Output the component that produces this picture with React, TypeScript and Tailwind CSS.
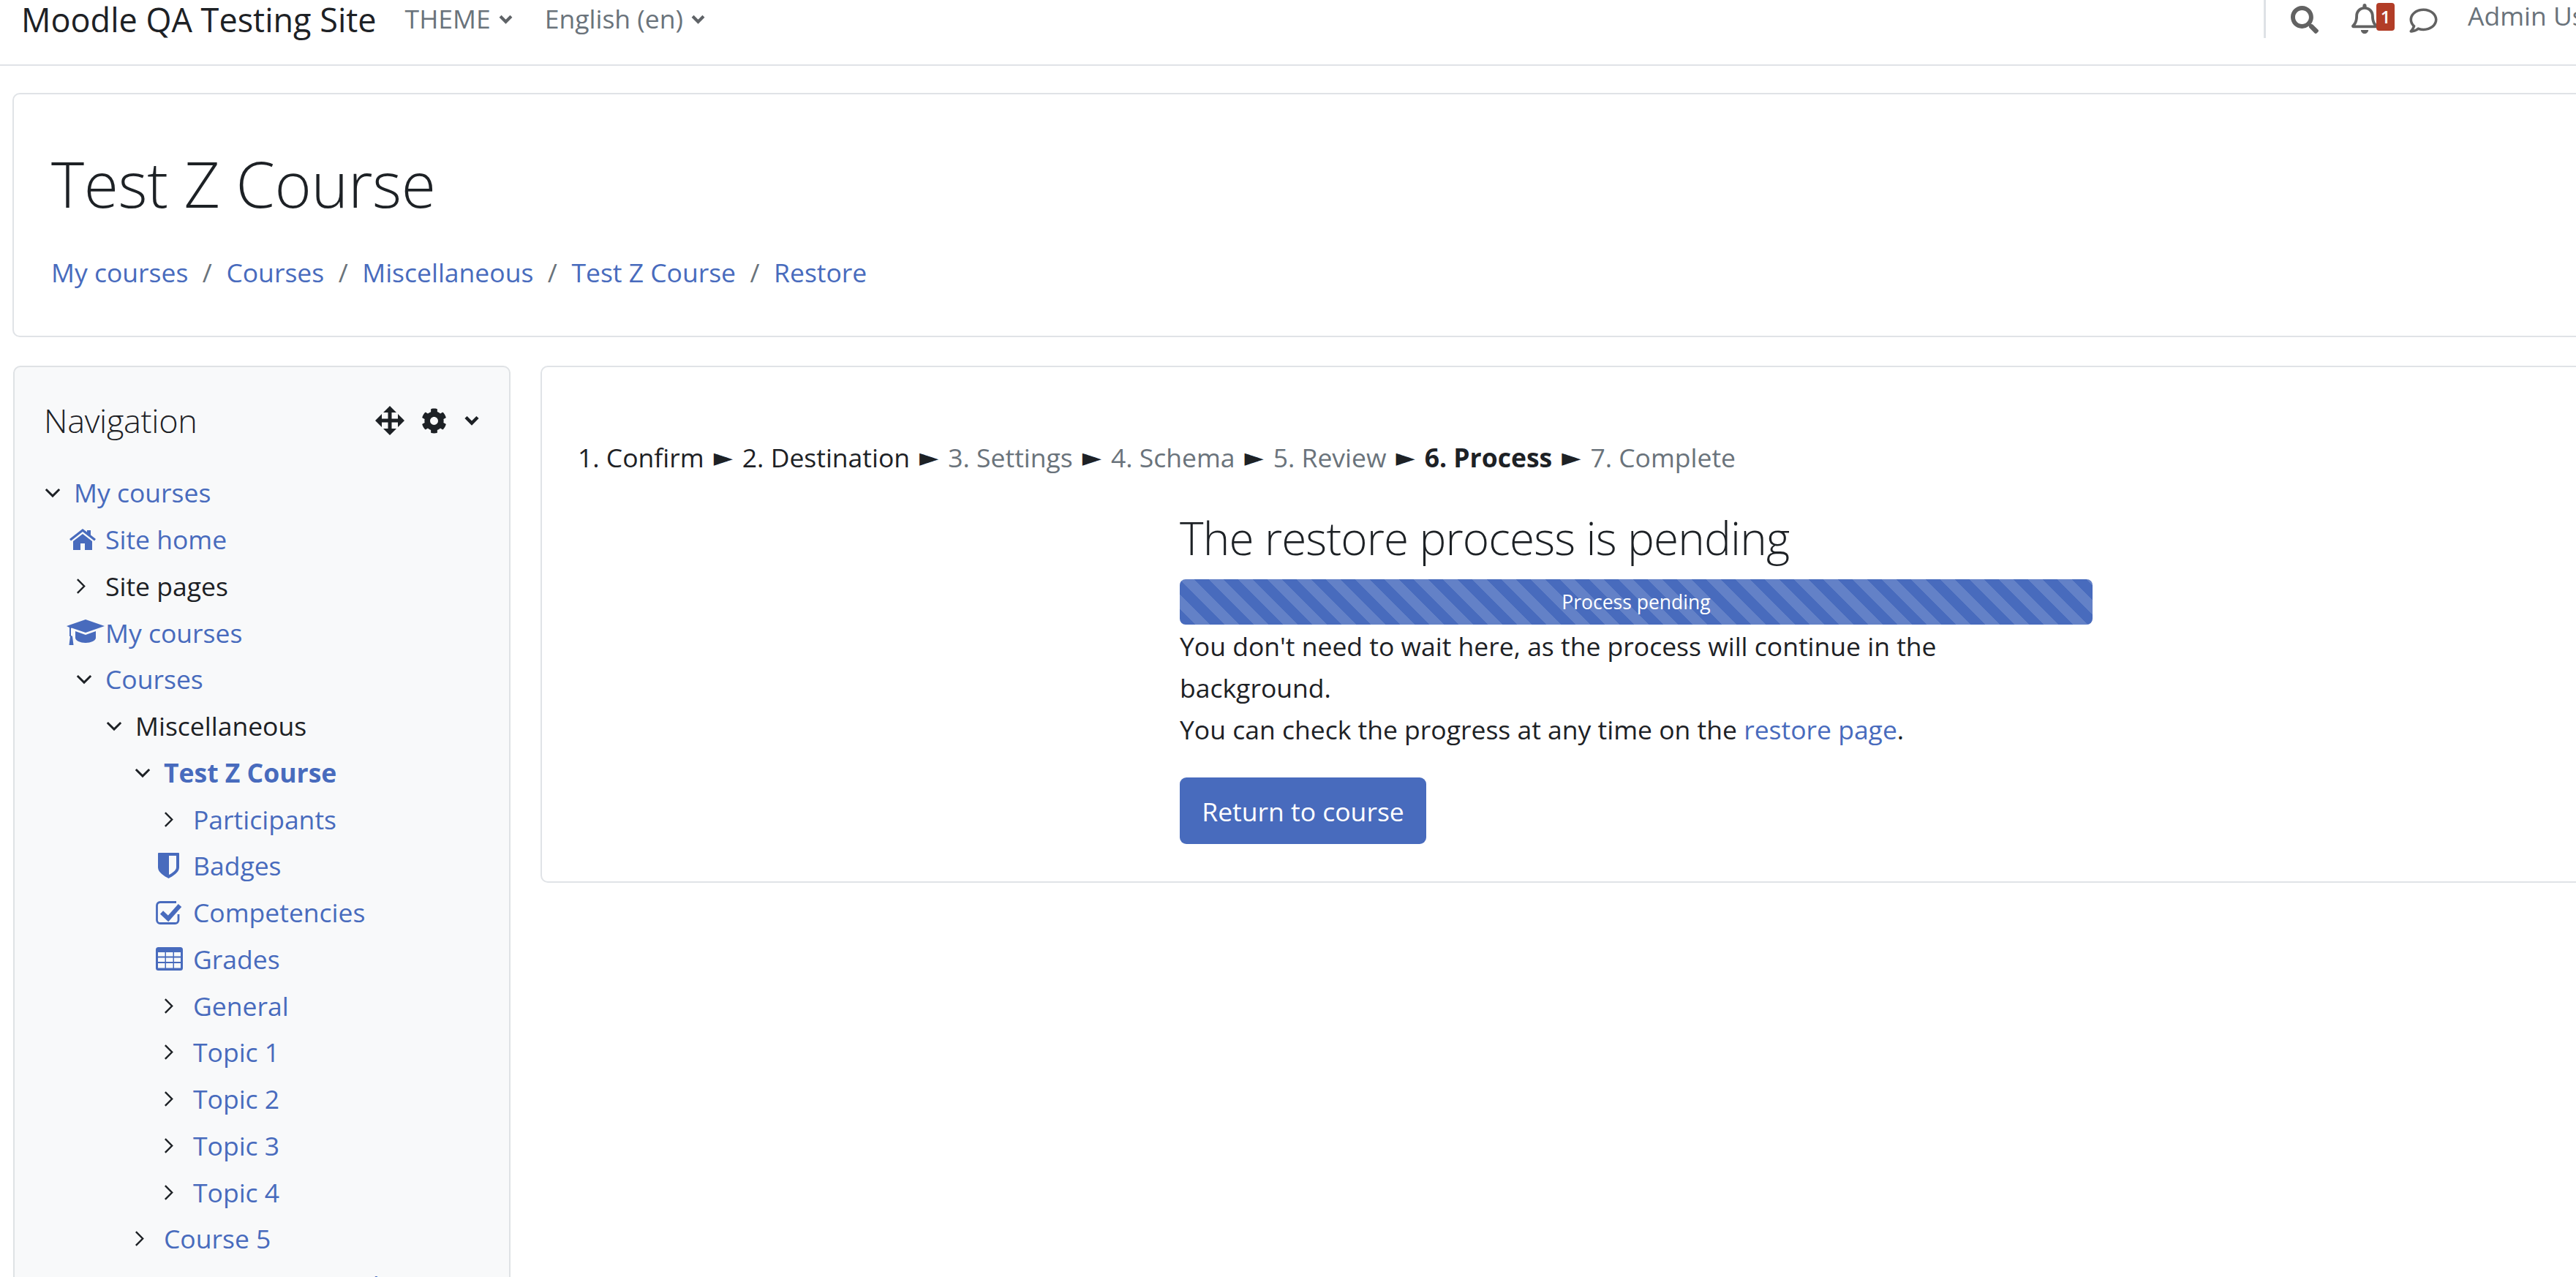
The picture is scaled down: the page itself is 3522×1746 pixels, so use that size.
import React from "react";
import { FaSearch, FaCog, FaRegBell, FaRegComment } from "react-icons/fa";

const Down = ({ className = "" }: { className?: string }) => (
  <svg viewBox="0 0 24 16" className={className} fill="none" stroke="currentColor" strokeWidth="3.2"><path d="M2 3l10 10L22 3" /></svg>
);
const Right = ({ className = "" }: { className?: string }) => (
  <svg viewBox="0 0 14 24" className={className} fill="none" stroke="currentColor" strokeWidth="2.6"><path d="M2 2l10 10L2 22" /></svg>
);
const ThickDown = ({ className = "" }: { className?: string }) => (
  <svg viewBox="0 0 20 14" className={className} fill="none" stroke="currentColor" strokeWidth="4.5"><path d="M2 2.5l8 8 8-8" /></svg>
);
const Home = () => (
  <svg viewBox="0 0 36 29" className="w-[36px] h-[29px] text-[#486bbd]" fill="currentColor">
    <path d="M18 0L0 14l2 2.500L18 4l16 12.500 2-2.500-7-5.500V2h-5v2.500z" />
    <path d="M18 7L5 17v12h10v-9h6v9h10V17z" />
  </svg>
);
const Cap = () => (
  <svg viewBox="0 0 52 36" className="w-[52px] h-[36px] text-[#486bbd]" fill="currentColor">
    <path d="M26 0l26 9-26 9-19-6.500-1 0.500v11h-2V11L0 9z" />
    <path d="M12 16l14 5 14-5v9c0 4-7 7-14 7s-14-3-14-7z" />
    <path d="M3.500 35L5 23l1.500-1 1.500 1 1.500 12z" />
  </svg>
);
const Shield = () => (
  <svg viewBox="0 0 29 35" className="w-[29px] h-[35px] text-[#486bbd]" fill="currentColor">
    <path fillRule="evenodd" d="M1 0h27a1 1 0 011 1v19c0 7-9 12-14.500 15C9 32 0 27 0 20V1a1 1 0 011-1zm14 4v26c4-2 10-6 10-10V4z" />
  </svg>
);
const Check = () => (
  <svg viewBox="0 0 37 32" className="w-[37px] h-[32px] text-[#486bbd]" fill="none" stroke="currentColor">
    <path strokeWidth="2.8" d="M31 18v8a4.500 4.500 0 01-4.500 4.500H6A4.500 4.500 0 011.500 26V6A4.500 4.500 0 016 1.500h22" />
    <path strokeWidth="6" d="M8 15.500l9 8.500L33 6" />
  </svg>
);
const TableIcon = () => (
  <svg viewBox="0 0 37 32" className="w-[37px] h-[32px] text-[#486bbd]">
    <rect width="37" height="32" rx="3.500" fill="currentColor" />
    <g fill="#f8f9fa">
      <rect x="3" y="7" width="9.500" height="5.500" /><rect x="14" y="7" width="9.500" height="5.500" /><rect x="25" y="7" width="9" height="5.500" />
      <rect x="3" y="14.500" width="9.500" height="5.500" /><rect x="14" y="14.500" width="9.500" height="5.500" /><rect x="25" y="14.500" width="9" height="5.500" />
      <rect x="3" y="22" width="9.500" height="6.500" /><rect x="14" y="22" width="9.500" height="6.500" /><rect x="25" y="22" width="9" height="6.500" />
    </g>
  </svg>
);
const Arrows = () => (
  <svg viewBox="0 0 40 40" className="w-[40px] h-[40px]" fill="currentColor">
    <path d="M20 0l9 9h-6.500v8.500H31V11l9 9-9 9v-6.500h-8.500V31H29l-9 9-9-9h6.500v-8.500H9V29l-9-9 9-9v6.500h8.500V9H11z" />
  </svg>
);

type RowT = { t: string; l: number; kind: "down" | "right" | "home" | "cap" | "shield" | "check" | "table"; link?: boolean; bold?: boolean };
const rows: RowT[] = [
  { t: "My courses", l: 0, kind: "down", link: true },
  { t: "Site home", l: 1, kind: "home", link: true },
  { t: "Site pages", l: 1, kind: "right" },
  { t: "My courses", l: 1, kind: "cap", link: true },
  { t: "Courses", l: 1, kind: "down", link: true },
  { t: "Miscellaneous", l: 2, kind: "down" },
  { t: "Test Z Course", l: 3, kind: "down", link: true, bold: true },
  { t: "Participants", l: 4, kind: "right", link: true },
  { t: "Badges", l: 4, kind: "shield", link: true },
  { t: "Competencies", l: 4, kind: "check", link: true },
  { t: "Grades", l: 4, kind: "table", link: true },
  { t: "General", l: 4, kind: "right", link: true },
  { t: "Topic 1", l: 4, kind: "right", link: true },
  { t: "Topic 2", l: 4, kind: "right", link: true },
  { t: "Topic 3", l: 4, kind: "right", link: true },
  { t: "Topic 4", l: 4, kind: "right", link: true },
  { t: "Course 5", l: 3, kind: "right", link: true },
  { t: "Test Course Number", l: 3, kind: "right", link: true },
];
const pads = ["pl-[30px]", "pl-[73px]", "pl-[114px]", "pl-[153px]", "pl-[193px]"];

function RowIcon({ kind }: { kind: RowT["kind"] }) {
  switch (kind) {
    case "down": return <Down className="ml-[11px] w-[22px] h-[15px] text-[#1d2125]" />;
    case "right": return <Right className="ml-[11px] w-[13px] h-[23px] text-[#1d2125]" />;
    case "home": return <div className="ml-[2px]"><Home /></div>;
    case "cap": return <div className="-ml-[2px]"><Cap /></div>;
    case "shield": return <div className="ml-[3px]"><Shield /></div>;
    case "check": return <Check />;
    case "table": return <TableIcon />;
  }
}

const Sep = () => <span className="mx-[13px] text-[#1d2125] text-[34px] font-['DejaVu_Sans',sans-serif]">►</span>;
const Slash = () => <span className="mx-[19.5px] text-[#6a737b]">/</span>;

export default function App() {
  return (
    <div className="w-full h-[1746px] overflow-hidden bg-white font-['Open_Sans',sans-serif] text-[#1d2125] text-[35.5px]">
      <div className="w-[3900px]">
        <header className="h-[90px] border-b-2 border-[#e0e3e7] flex items-start">
          <div className="w-[3095px] shrink-0 flex items-start">
            <span className="ml-[29px] text-[45px] leading-[54px] text-[#1d2125]">Moodle QA Testing Site</span>
            <nav className="flex items-center ml-[39px] h-[52px] text-[#6a737b]">
              <span>THEME</span><ThickDown className="ml-[11px] w-[19px] h-[13px] text-[#5f6367]" />
              <span className="ml-[44px]">English (en)</span><ThickDown className="ml-[11px] w-[19px] h-[13px] text-[#5f6367]" />
            </nav>
          </div>
          <div className="w-[3px] h-[52px] bg-[#dee2e6]" />
          <div className="ml-[34px] mt-[8px] text-[#626262]"><FaSearch className="w-[38px] h-[38px]" /></div>
          <div className="relative ml-[44px] mt-[5px] text-[#626262]">
            <FaRegBell className="w-[38px] h-[41px]" />
            <span className="absolute left-[35px] top-[-1px] w-[25px] h-[38px] rounded-[4px] bg-[#b23d27] text-white text-[24px] leading-[38px] text-center font-semibold">1</span>
          </div>
          <div className="ml-[41px] mt-[9px] text-[#626262]"><FaRegComment className="w-[41px] h-[38px]" /></div>
          <span className="ml-[40px] leading-[42px] text-[#6a737b]">Admin User</span>
        </header>

        <section className="ml-[17px] mt-[37px] h-[334px] border-2 border-[#e0e3e7] rounded-[10px] pl-[51px]">
          <h1 className="mt-[62px] text-[86px] leading-[120px] font-light tracking-[-0.4px] text-[#1d2125]">Test Z Course</h1>
          <div className="mt-[36px] flex items-center text-[#486bbd] leading-[50px]">
            <span>My courses</span><Slash />
            <span>Courses</span><Slash />
            <span>Miscellaneous</span><Slash />
            <span>Test Z Course</span><Slash />
            <span>Restore</span>
          </div>
        </section>

        <div className="flex mt-[39px] items-start">
          <aside className="ml-[18px] w-[680px] h-[1400px] shrink-0 border-2 border-[#dfe2e5] rounded-[10px] bg-[#f8f9fa]">
            <div className="flex items-center h-[68px] mt-[39px] pl-[40px]">
              <span className="text-[45px] font-light tracking-[-0.3px] leading-[68px]">Navigation</span>
              <span className="ml-[243px] flex items-center"><Arrows /><FaCog className="ml-[23px] w-[35px] h-[35px]" /><ThickDown className="ml-[24px] w-[20px] h-[14px]" /></span>
            </div>
            <ul className="mt-[33px]">
              {rows.map((r, i) => (
                <li key={i} className={"flex items-center h-[63.75px] " + pads[r.l]}>
                  <div className="w-[51px] flex items-center shrink-0"><RowIcon kind={r.kind} /></div>
                  <span className={(r.link ? "text-[#486bbd] " : "text-[#1d2125] ") + (r.bold ? "font-bold" : "")}>{r.t}</span>
                </li>
              ))}
            </ul>
          </aside>

          <main className="ml-[41px] flex-1 h-[707px] border-2 border-[#e0e3e7] rounded-[10px] pl-[49px] pt-[98px]">
            <div className="flex items-center leading-[50px] whitespace-nowrap">
              <span>1. Confirm</span><Sep /><span>2. Destination</span><Sep />
              <span className="text-[#6a737b]">3. Settings</span><Sep />
              <span className="text-[#6a737b]">4. Schema</span><Sep />
              <span className="text-[#6a737b]">5. Review</span><Sep />
              <span className="font-bold">6. Process</span><Sep />
              <span className="text-[#6a737b]">7. Complete</span>
            </div>
            <div className="ml-[823px] mt-[43px] w-[1248px]">
              <h2 className="text-[62px] leading-[84px] font-light tracking-[-0.85px]">The restore process is pending</h2>
              <div className="mt-[15px] h-[62px] pt-[2px] rounded-[8px] bg-[#486bbd] bg-[linear-gradient(45deg,rgba(255,255,255,.15)_25%,transparent_25%,transparent_50%,rgba(255,255,255,.15)_50%,rgba(255,255,255,.15)_75%,transparent_75%,transparent)] bg-[length:40px_40px] flex items-center justify-center text-white text-[26.5px]">Process pending</div>
              <p className="mt-[1px] leading-[57px]">You don't need to wait here, as the process will continue in the<br />background.<br />You can check the progress at any time on the <span className="text-[#486bbd]">restore page</span>.</p>
              <div className="mt-[37px] w-[337px] h-[91px] pt-[2px] rounded-[9px] bg-[#486bbd] text-white flex items-center justify-center">Return to course</div>
            </div>
          </main>
        </div>
      </div>
    </div>
  );
}
